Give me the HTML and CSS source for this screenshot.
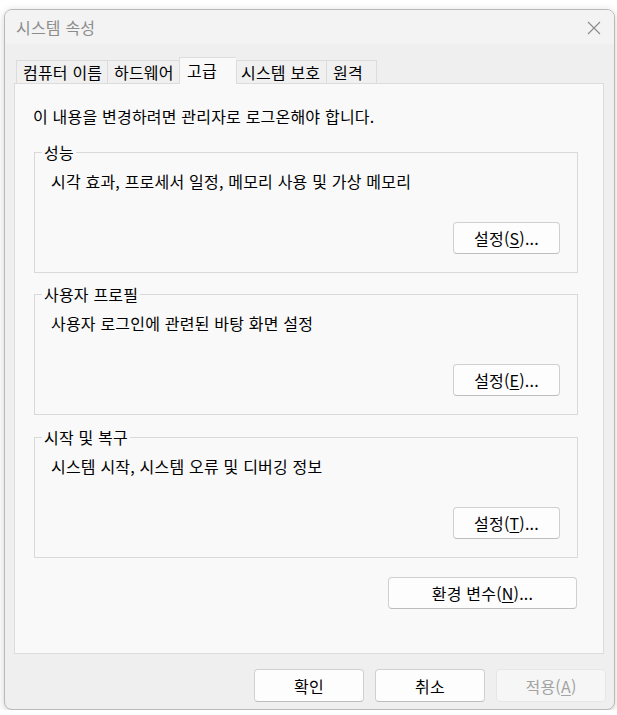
FILE: index.html
```html
<!DOCTYPE html>
<html lang="ko">
<head>
<meta charset="utf-8">
<title>시스템 속성</title>
<link rel="stylesheet" href="styles.css">
</head>
<body>
<div class="window">
  <div class="titlebar">
    <span class="title">시스템 속성</span>
    <svg class="close" width="14" height="14" viewBox="0 0 14 14"><path d="M1 1L13 13M13 1L1 13" stroke="#8a8a8a" stroke-width="1.1" fill="none"/></svg>
  </div>
  <div class="body">
    <div class="tabs">
      <div class="tab t1">컴퓨터 이름</div>
      <div class="tab t2">하드웨어</div>
      <div class="tab t3 active">고급</div>
      <div class="tab t4">시스템 보호</div>
      <div class="tab t5">원격</div>
    </div>
    <div class="panel">
      <p class="notice">이 내용을 변경하려면 관리자로 로그온해야 합니다.</p>
      <div class="group g1">
        <div class="group-title">성능</div>
        <p class="desc">시각 효과, 프로세서 일정, 메모리 사용 및 가상 메모리</p>
        <div class="row"><button class="btn">설정(<u>S</u>)...</button></div>
      </div>
      <div class="group g2">
        <div class="group-title">사용자 프로필</div>
        <p class="desc">사용자 로그인에 관련된 바탕 화면 설정</p>
        <div class="row"><button class="btn">설정(<u>E</u>)...</button></div>
      </div>
      <div class="group g3">
        <div class="group-title">시작 및 복구</div>
        <p class="desc">시스템 시작, 시스템 오류 및 디버깅 정보</p>
        <div class="row"><button class="btn">설정(<u>T</u>)...</button></div>
      </div>
      <div class="row env"><button class="btn wide">환경 변수(<u>N</u>)...</button></div>
    </div>
  </div>
  <div class="footer">
    <button class="btn foot">확인</button>
    <button class="btn foot">취소</button>
    <button class="btn foot disabled">적용(<u>A</u>)</button>
  </div>
</div>
</body>
</html>
```

FILE: styles.css
```css
* { box-sizing: border-box; }
html, body {
  margin: 0;
  padding: 0;
  background: #ffffff;
  font-family: "Noto Sans CJK KR", "Noto Sans", sans-serif;
  font-size: 16px;
  letter-spacing: 0.2px;
  color: #000;
}
body { padding: 9px 2px 0 4px; }
.window {
  width: 611px;
  height: 701px;
  border: 1px solid #b9b9b9;
  border-radius: 8px;
  background: #efefef;
  box-shadow: 0 2px 8px rgba(0,0,0,0.18);
  overflow: hidden;
  display: flex;
  flex-direction: column;
}
.titlebar {
  height: 34px;
  background: #f3f3f3;
  display: flex;
  align-items: center;
  justify-content: space-between;
  padding: 0 13px 0 11px;
  flex: none;
}
.title {
  color: #8c8c8c;
  line-height: 20px;
}
.close { display: block; margin-top: 1px; }
.body {
  display: flex;
  flex-direction: column;
  padding: 13px 10px 0 9px;
  flex: none;
}
.tabs {
  display: flex;
  align-items: flex-end;
  height: 26px;
  padding-left: 2px;
  position: relative;
  z-index: 1;
}
.tab {
  height: 23px;
  border: 1px solid #dcdcdc;
  border-bottom: none;
  border-right: none;
  background: #f0f0f0;
  line-height: 22px;
  white-space: nowrap;
  padding-left: 6px;
}
.t1 { width: 91px; }
.t2 { width: 72px; }
.t3 { width: 57px; padding-left: 7px; }
.t4 { width: 90px; padding-left: 4px; }
.t5 { width: 51px; border-right: 1px solid #dcdcdc; }
.tab.active {
  height: 27px;
  margin-bottom: -1px;
  background: #f9f9f9;
  line-height: 24px;
}
.panel {
  height: 571px;
  background: #f9f9f9;
  border: 1px solid #dcdcdc;
  padding: 22px 25px 0 19px;
}
.notice {
  margin: 0 0 26px -1px;
  line-height: 20px;
}
.group {
  border: 1px solid #d9d9d9;
  padding: 0 17px 18px 16px;
}
.g2 { margin-top: 21px; }
.g3 { margin-top: 22px; }
.group-title {
  width: fit-content;
  height: 20px;
  margin: -11px 0 0 -9px;
  padding: 0 2px;
  background: #f9f9f9;
  line-height: 20px;
}
.desc {
  margin: 9px 0 0 0;
  line-height: 20px;
}
.row {
  display: flex;
  justify-content: flex-end;
  margin-top: 31px;
}
.btn {
  font-family: inherit;
  font-size: 16px;
  letter-spacing: 0.2px;
  color: #000;
  background: #fdfdfd;
  border: 1px solid #d0d0d0;
  border-bottom-color: #bdbdbd;
  border-radius: 4px;
  height: 32px;
  width: 107px;
  padding: 0;
  line-height: 20px;
  white-space: nowrap;
}
.btn u { text-underline-offset: 2px; }
.env { margin-top: 19px; padding-right: 1px; }
.btn.wide { width: 189px; }
.footer {
  display: flex;
  justify-content: flex-end;
  gap: 11px;
  padding: 15px 8px 0 0;
}
.btn.foot { width: 110px; height: 33px; }
.btn.disabled {
  color: #a3a3a3;
  background: #f6f6f6;
  border-color: #e6e6e6;
}
```
